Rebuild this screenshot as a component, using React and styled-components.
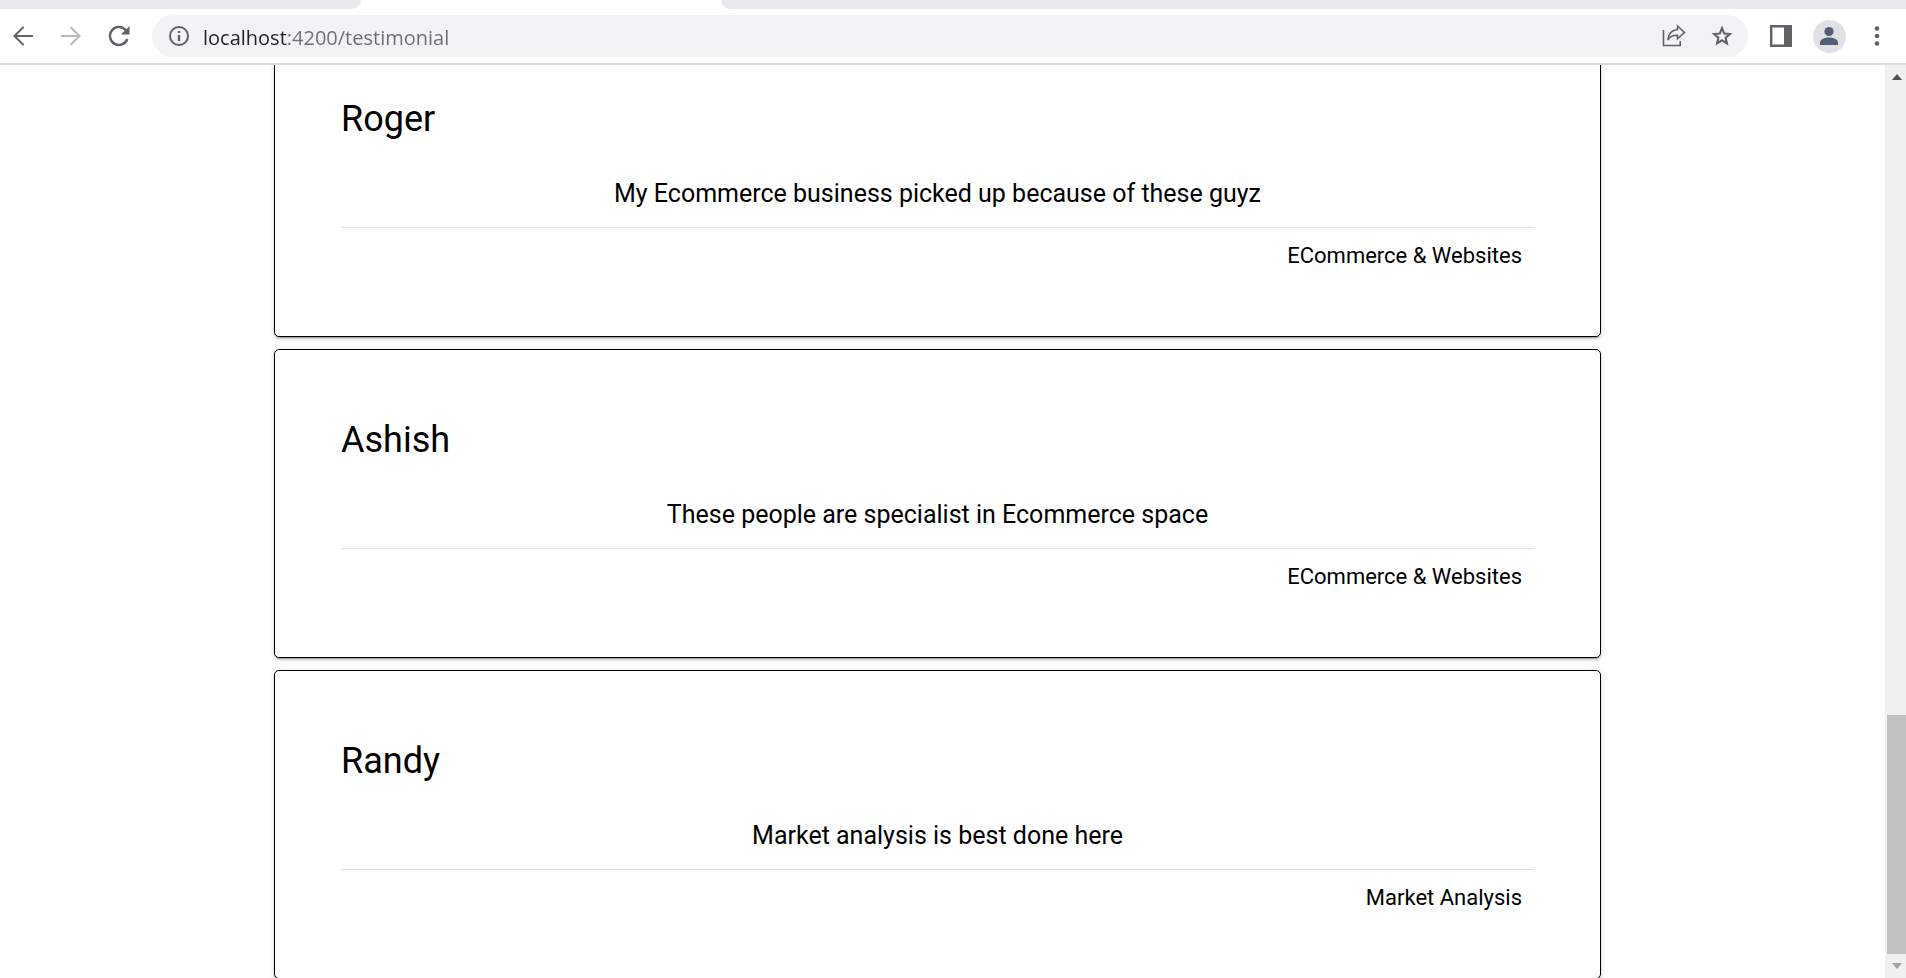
import React from "react";
import styled, { createGlobalStyle } from "styled-components";

const GlobalStyle = createGlobalStyle`
  *, *::before, *::after { box-sizing: border-box; }
  html, body { margin: 0; padding: 0; }
  body { background: #fff; color: #000; font-family: Roboto, "Liberation Sans", sans-serif; overflow: hidden; }
  h2, p { margin: 0; font-weight: 400; }
`;

const Window = styled.div`
  display: flex;
  flex-direction: column;
  height: 100vh;
`;

const TabStrip = styled.div`
  display: flex;
  flex: none;
  height: 9px;
`;

const TabEdge = styled.div`
  background: #e8eaed;
  ${(p) =>
    p.$side === "left"
      ? "width: 361px; border-bottom-right-radius: 9px;"
      : "flex: 1; margin-left: 360px; border-bottom-left-radius: 9px;"}
`;

const Toolbar = styled.header`
  display: flex;
  align-items: center;
  flex: none;
  height: 56px;
  padding: 0 13px 0 7px;
  border-bottom: 2px solid #dcdcdc;
`;

const IconButton = styled.button`
  display: flex;
  align-items: center;
  justify-content: center;
  flex: none;
  width: 32px;
  height: 32px;
  margin: 0;
  padding: 0;
  border: 0;
  background: none;
  color: ${(p) => (p.$muted ? "#babcbe" : "#5f6368")};
`;

const Navigation = styled.nav`
  display: flex;
  gap: 16px;
  margin-right: 17px;
`;

const AddressBar = styled.form`
  display: flex;
  align-items: center;
  flex: 1;
  height: 42px;
  padding: 0 10px 0 11px;
  gap: 8px;
  border-radius: 21px;
  background: #f1f3f4;
`;

const AddressInput = styled.input`
  flex: 1;
  min-width: 0;
  height: 32px;
  padding: 2px 0 0;
  border: 0;
  outline: 0;
  font: 20px/30px "Open Sans", "Noto Sans", sans-serif;
  color: #5f6368;
  background: linear-gradient(to right, #202124 83px, #6b6e72 83px);
  background-clip: text;
  -webkit-background-clip: text;
  -webkit-text-fill-color: transparent;
`;

const Actions = styled.div`
  display: flex;
  align-items: center;
  gap: 16px;
`;

const BrowserActions = styled(Actions)`
  margin-left: 17px;
`;

const Avatar = styled.span`
  display: flex;
  align-items: center;
  justify-content: center;
  flex: none;
  width: 33px;
  height: 33px;
  border-radius: 50%;
  background: #dee1e6;
  color: #525e74;
`;

const Page = styled.div`
  display: flex;
  flex: 1;
  min-height: 0;
`;

const Content = styled.main`
  display: flex;
  flex-direction: column;
  justify-content: flex-end;
  flex: 1;
  gap: 12px;
  min-width: 0;
  overflow: hidden;
  padding: 0 284px 0 274px;
`;

const Card = styled.article`
  flex: none;
  padding: 66px;
  border: 1px solid #000;
  border-radius: 5px;
  background: #fff;
  box-shadow: 0 3px 1px -2px rgba(0, 0, 0, 0.2), 0 2px 2px rgba(0, 0, 0, 0.14),
    0 1px 6px rgba(0, 0, 0, 0.12);

  &:last-child {
    margin-bottom: -1px;
  }
`;

const Name = styled.h2`
  font-size: 36px;
  line-height: 48px;
`;

const Quote = styled.p`
  margin-top: 36px;
  padding-bottom: 18px;
  border-bottom: 1px solid #e0e0e0;
  font-size: 25px;
  line-height: 30px;
  text-align: center;
`;

const Category = styled.p`
  padding: 12px 12px 0 0;
  margin-bottom: -2px;
  font-size: 22px;
  line-height: 32px;
  text-align: right;
`;

const ScrollBar = styled.div`
  display: flex;
  flex-direction: column;
  flex: none;
  width: 21px;
  padding-left: 2px;
  background: #f0f0f0;
`;

const ScrollArrow = styled.button`
  display: flex;
  align-items: center;
  justify-content: center;
  height: 24px;
  padding: 0 0 0 1px;
  border: 0;
  background: none;
  color: ${(p) => (p.$muted ? "#a3a3a3" : "#505050")};
`;

const ScrollTrack = styled.div`
  display: flex;
  flex-direction: column;
  flex: 1;

  &::before {
    content: "";
    flex: 626 0 0;
  }
`;

const ScrollThumb = styled.div`
  flex: 239 0 0;
  background: #c1c1c1;
`;

const testimonials = [
  { name: "Roger", quote: "My Ecommerce business picked up because of these guyz", category: "ECommerce & Websites" },
  { name: "Ashish", quote: "These people are specialist in Ecommerce space", category: "ECommerce & Websites" },
  { name: "Randy", quote: "Market analysis is best done here", category: "Market Analysis" },
];

const Icon = ({ size = 20, children }) => (
  <svg
    width={size}
    height={size}
    viewBox={`0 0 ${size} ${size}`}
    fill="none"
    stroke="currentColor"
    strokeWidth="2"
    aria-hidden="true"
  >
    {children}
  </svg>
);

export default function App() {
  return (
    <>
      <GlobalStyle />
      <Window>
        <TabStrip>
          <TabEdge $side="left" />
          <TabEdge $side="right" />
        </TabStrip>
        <Toolbar>
          <Navigation aria-label="History">
            <IconButton aria-label="Back">
              <Icon><path d="M20 10H2M10.5 1L1.5 10l9 9" /></Icon>
            </IconButton>
            <IconButton aria-label="Forward" $muted>
              <Icon><path d="M0 10h18M9.5 1l9 9-9 9" /></Icon>
            </IconButton>
            <IconButton aria-label="Reload">
              <Icon size={22}>
                <path d="M18.2 5.6A9 9 0 1 0 19.4 14" strokeWidth="2.4" />
                <path d="M21.5 1v8.5H13z" fill="currentColor" stroke="none" />
              </Icon>
            </IconButton>
          </Navigation>
          <AddressBar onSubmit={(e) => e.preventDefault()}>
            <IconButton type="button" aria-label="Site information">
              <Icon>
                <circle cx="10" cy="10" r="9" />
                <path d="M10 9v6M10 5v2" strokeWidth="2.4" />
              </Icon>
            </IconButton>
            <AddressInput aria-label="Address" defaultValue="localhost:4200/testimonial" spellCheck={false} />
            <Actions>
              <IconButton type="button" aria-label="Share">
                <Icon size={24}>
                  <path d="M1.5 6v15.5h16.7V17" strokeWidth="1.6" />
                  <path
                    d="M15.5 2l7 6.5-7 6.3v-3.6c-4.5-.2-7.5 1-9.7 4.8.5-5.6 3.5-9.8 9.7-10.5z"
                    strokeWidth="1.6"
                  />
                </Icon>
              </IconButton>
              <IconButton type="button" aria-label="Bookmark">
                <Icon size={24}>
                  <path d="M12 4.2l2.2 5.3 5.7.5-4.3 3.7 1.3 5.6-4.9-3-4.9 3 1.3-5.6L4.1 10l5.7-.5z" strokeWidth="2.1" />
                </Icon>
              </IconButton>
            </Actions>
          </AddressBar>
          <BrowserActions>
            <IconButton aria-label="Side panel">
              <Icon size={22}>
                <path d="M1.2 1.2h19.6v19.6H1.2z" strokeWidth="2.4" />
                <path d="M14 1h7v20h-7z" fill="currentColor" stroke="none" />
              </Icon>
            </IconButton>
            <IconButton aria-label="Profile">
              <Avatar>
                <Icon>
                  <circle cx="10" cy="5.5" r="4.6" fill="currentColor" stroke="none" />
                  <path d="M1 19v-2.500c0-3.300 5-5 9-5s9 1.700 9 5V19z" fill="currentColor" stroke="none" />
                </Icon>
              </Avatar>
            </IconButton>
            <IconButton aria-label="Menu">
              <Icon>
                <g fill="currentColor" stroke="none">
                  <circle cx="10" cy="2.5" r="2.3" />
                  <circle cx="10" cy="10" r="2.3" />
                  <circle cx="10" cy="17.5" r="2.3" />
                </g>
              </Icon>
            </IconButton>
          </BrowserActions>
        </Toolbar>
        <Page>
          <Content>
            {testimonials.map((t) => (
              <Card key={t.name}>
                <Name>{t.name}</Name>
                <Quote>{t.quote}</Quote>
                <Category>{t.category}</Category>
              </Card>
            ))}
          </Content>
          <ScrollBar>
            <ScrollArrow aria-label="Scroll up">
              <svg width="10" height="6" viewBox="0 0 10 6" fill="currentColor"><path d="M0 6l5-6 5 6z" /></svg>
            </ScrollArrow>
            <ScrollTrack>
              <ScrollThumb />
            </ScrollTrack>
            <ScrollArrow aria-label="Scroll down" $muted>
              <svg width="10" height="6" viewBox="0 0 10 6" fill="currentColor"><path d="M0 0h10L5 6z" /></svg>
            </ScrollArrow>
          </ScrollBar>
        </Page>
      </Window>
    </>
  );
}
